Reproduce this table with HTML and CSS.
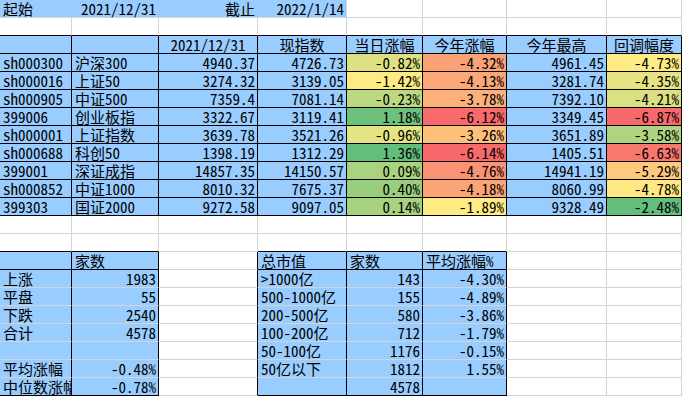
FILE: index.html
```html
<!DOCTYPE html>
<html lang="zh-CN">
<head>
<meta charset="utf-8">
<title>指数涨幅</title>
<link rel="stylesheet" href="styles.css">
</head>
<body>
<div class="sheet">
  <!-- row 1 -->
  <div class="c b nr">起始</div>
  <div class="c b nr r">2021/12/31</div>
  <div class="c b nr r">截止</div>
  <div class="c b r">2022/1/14</div>
  <div class="c"></div><div class="c"></div><div class="c"></div><div class="c"></div>
  <!-- row 2 -->
  <div class="c kb"></div><div class="c kb"></div><div class="c kb"></div><div class="c kb"></div>
  <div class="c kb"></div><div class="c kb"></div><div class="c kb"></div><div class="c kb"></div>
  <!-- row 3 header -->
  <div class="c b k"></div>
  <div class="c b k"></div>
  <div class="c b k m">2021/12/31</div>
  <div class="c b k m">现指数</div>
  <div class="c b k m">当日涨幅</div>
  <div class="c b k m">今年涨幅</div>
  <div class="c b k m">今年最高</div>
  <div class="c b k m">回调幅度</div>
  <!-- data rows -->
  <div class="c b k">sh000300</div><div class="c b k">沪深300</div><div class="c b k r">4940.37</div><div class="c b k r">4726.73</div>
  <div class="c k r" style="background:#DDE182">-0.82%</div><div class="c k r" style="background:#FBA176">-4.32%</div><div class="c b k r">4961.45</div><div class="c k r" style="background:#FFEB84">-4.73%</div>

  <div class="c b k">sh000016</div><div class="c b k">上证50</div><div class="c b k r">3274.32</div><div class="c b k r">3139.05</div>
  <div class="c k r" style="background:#FFEB84">-1.42%</div><div class="c k r" style="background:#FBA777">-4.13%</div><div class="c b k r">3281.74</div><div class="c k r" style="background:#E5E382">-4.35%</div>

  <div class="c b k">sh000905</div><div class="c b k">中证500</div><div class="c b k r">7359.4</div><div class="c b k r">7081.14</div>
  <div class="c k r" style="background:#BCD880">-0.23%</div><div class="c k r" style="background:#FCB179">-3.78%</div><div class="c b k r">7392.10</div><div class="c k r" style="background:#DBE182">-4.21%</div>

  <div class="c b k">399006</div><div class="c b k">创业板指</div><div class="c b k r">3322.67</div><div class="c b k r">3119.41</div>
  <div class="c k r" style="background:#6DC17C">1.18%</div><div class="c k r" style="background:#F86A6B">-6.12%</div><div class="c b k r">3349.45</div><div class="c k r" style="background:#F8696B">-6.87%</div>

  <div class="c b k">sh000001</div><div class="c b k">上证指数</div><div class="c b k r">3639.78</div><div class="c b k r">3521.26</div>
  <div class="c k r" style="background:#E5E483">-0.96%</div><div class="c k r" style="background:#FDC17C">-3.26%</div><div class="c b k r">3651.89</div><div class="c k r" style="background:#AFD47F">-3.58%</div>

  <div class="c b k">sh000688</div><div class="c b k">科创50</div><div class="c b k r">1398.19</div><div class="c b k r">1312.29</div>
  <div class="c k r" style="background:#63BE7B">1.36%</div><div class="c k r" style="background:#F8696B">-6.14%</div><div class="c b k r">1405.51</div><div class="c k r" style="background:#F9786E">-6.63%</div>

  <div class="c b k">399001</div><div class="c b k">深证成指</div><div class="c b k r">14857.35</div><div class="c b k r">14150.57</div>
  <div class="c k r" style="background:#AAD37F">0.09%</div><div class="c k r" style="background:#FA9373">-4.76%</div><div class="c b k r">14941.19</div><div class="c k r" style="background:#FDC97D">-5.29%</div>

  <div class="c b k">sh000852</div><div class="c b k">中证1000</div><div class="c b k r">8010.32</div><div class="c b k r">7675.37</div>
  <div class="c k r" style="background:#99CE7E">0.40%</div><div class="c k r" style="background:#FBA576">-4.18%</div><div class="c b k r">8060.99</div><div class="c k r" style="background:#FFE883">-4.78%</div>

  <div class="c b k">399303</div><div class="c b k">国证2000</div><div class="c b k r">9272.58</div><div class="c b k r">9097.05</div>
  <div class="c k r" style="background:#A7D27F">0.14%</div><div class="c k r" style="background:#FFEB84">-1.89%</div><div class="c b k r">9328.49</div><div class="c k r" style="background:#63BE7B">-2.48%</div>
  <!-- row 13 -->
  <div class="c"></div><div class="c"></div><div class="c"></div><div class="c"></div>
  <div class="c"></div><div class="c"></div><div class="c"></div><div class="c"></div>
  <!-- row 14 -->
  <div class="c kb"></div><div class="c kb"></div><div class="c"></div><div class="c kb"></div>
  <div class="c kb"></div><div class="c kb"></div><div class="c"></div><div class="c"></div>
  <!-- row 15 -->
  <div class="c b k"></div><div class="c b k">家数</div><div class="c kr"></div><div class="c b k">总市值</div>
  <div class="c b k">家数</div><div class="c b k">平均涨幅%</div><div class="c"></div><div class="c"></div>
  <!-- row 16 -->
  <div class="c b kr">上涨</div><div class="c b kr r">1983</div><div class="c kr"></div><div class="c b kr">&gt;1000亿</div>
  <div class="c b kr r">143</div><div class="c b kr r">-4.30%</div><div class="c"></div><div class="c"></div>
  <!-- row 17 -->
  <div class="c b kr">平盘</div><div class="c b kr r">55</div><div class="c kr"></div><div class="c b kr">500-1000亿</div>
  <div class="c b kr r">155</div><div class="c b kr r">-4.89%</div><div class="c"></div><div class="c"></div>
  <!-- row 18 -->
  <div class="c b kr">下跌</div><div class="c b kr r">2540</div><div class="c kr"></div><div class="c b kr">200-500亿</div>
  <div class="c b kr r">580</div><div class="c b kr r">-3.86%</div><div class="c"></div><div class="c"></div>
  <!-- row 19 -->
  <div class="c b kr">合计</div><div class="c b kr r">4578</div><div class="c kr"></div><div class="c b kr">100-200亿</div>
  <div class="c b kr r">712</div><div class="c b kr r">-1.79%</div><div class="c"></div><div class="c"></div>
  <!-- row 20 -->
  <div class="c b kr"></div><div class="c b kr r"></div><div class="c kr"></div><div class="c b kr">50-100亿</div>
  <div class="c b kr r">1176</div><div class="c b kr r">-0.15%</div><div class="c"></div><div class="c"></div>
  <!-- row 21 -->
  <div class="c b kr">平均涨幅</div><div class="c b kr r">-0.48%</div><div class="c kr"></div><div class="c b kr">50亿以下</div>
  <div class="c b kr r">1812</div><div class="c b kr r">1.55%</div><div class="c"></div><div class="c"></div>
  <!-- row 22 -->
  <div class="c b k clip">中位数涨幅</div><div class="c b k r">-0.78%</div><div class="c kr"></div><div class="c b k"></div>
  <div class="c b k r">4578</div><div class="c b k r"></div><div class="c"></div><div class="c"></div>
</div>
</body>
</html>
```
FILE: styles.css
```css
html, body {
  margin: 0;
  padding: 0;
  background: #ffffff;
}

.sheet {
  display: grid;
  grid-template-columns: 72px 87px 99px 89px 76px 84px 100px 75px;
  grid-auto-rows: 18px;
  width: 682px;
  font-family: "Noto Sans Mono CJK SC", "Noto Sans CJK SC", "Liberation Mono", monospace;
  font-size: 15px;
  color: #000000;
}

.c {
  box-sizing: border-box;
  border-right: 1px solid #d4d4d4;
  border-bottom: 1px solid #d4d4d4;
  padding: 0 2px 0 3px;
  line-height: 17px;
  white-space: nowrap;
}

.b { background: #99ccff; }
.r { text-align: right; }
.m { text-align: center; padding: 0; }
.nr { border-right-color: #99ccff; }
.k { border-right-color: #000000; border-bottom-color: #000000; }
.kr { border-right-color: #000000; }
.kb { border-bottom-color: #000000; }
.clip { overflow: hidden; text-overflow: clip; padding-right: 0; }
```
